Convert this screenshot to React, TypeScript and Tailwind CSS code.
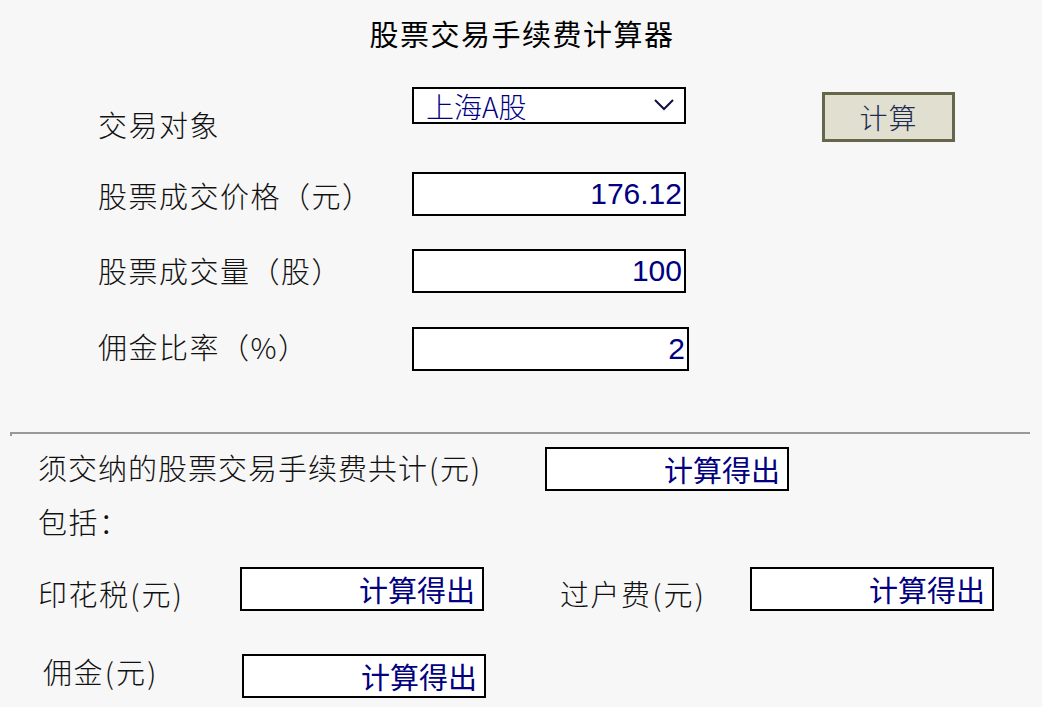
import React from "react";

const cjk = { fontFamily: '"Noto Sans CJK SC", "Noto Sans", sans-serif' };
const num = { fontFamily: '"Liberation Sans", Arial, sans-serif' };

function NumBox({ value, w }: { value: string; w: string }) {
  return (
    <div
      className={`${w} h-[44px] border-2 border-black bg-white flex items-center justify-end pr-[2px] text-[30px] leading-none text-[#000080]`}
      style={num}
    >
      {value}
    </div>
  );
}

function OutBox() {
  return (
    <div
      className="w-[244px] h-[44px] border-2 border-black bg-white flex items-center justify-end pr-[7px] text-[29px] leading-none font-normal text-[#000080]"
      style={cjk}
    >
      计算得出
    </div>
  );
}

function P({ c }: { c: string }) {
  return <span className="inline-block w-[12px] text-center">{c}</span>;
}

export default function App() {
  return (
    <div className="w-[1042px] h-[707px] bg-[#f7f7f7] overflow-hidden text-[#111]" style={cjk}>
      <div className="h-[66px] flex items-center justify-center">
        <h1 className="text-[29px] leading-none font-normal text-black tracking-[1.5px] pl-[2px]">股票交易手续费计算器</h1>
      </div>

      <div className="pl-[98px]">
        <div className="h-[106px] flex items-start">
          <div className="w-[314px] mt-[44px] text-[29px] leading-[29px] font-light tracking-[1.5px]">交易对象</div>
          <div className="mt-[21px] w-[274px] h-[37px] border-2 border-black bg-white flex items-center justify-between pl-[12px] pr-[10px]">
            <span className="text-[28px] leading-none font-light text-[#000080]">上海A股</span>
            <svg width="20" height="12" viewBox="0 0 20 12" className="mb-[2px]">
              <path d="M1 1 L10 10 L19 1" fill="none" stroke="#101040" strokeWidth="2" />
            </svg>
          </div>
          <div className="ml-[136px] mt-[26px] w-[133px] h-[50px] border-[3px] border-[#66664a] bg-[#e1dfcf] flex items-center justify-center text-[28px] leading-none font-light text-[#1c2c52] tracking-[1px]">
            计算
          </div>
        </div>

        <div className="h-[77px] flex items-start">
          <div className="w-[314px] mt-[9px] text-[29px] leading-[29px] font-light tracking-[1.5px] whitespace-nowrap">股票成交价格（元）</div>
          <NumBox value="176.12" w="w-[274px]" />
        </div>

        <div className="h-[78px] flex items-start">
          <div className="w-[314px] mt-[7px] text-[29px] leading-[29px] font-light tracking-[1.5px] whitespace-nowrap">股票成交量（股）</div>
          <NumBox value="100" w="w-[274px]" />
        </div>

        <div className="h-[44px] flex items-start">
          <div className="w-[314px] mt-[5px] text-[29px] leading-[29px] font-light tracking-[1.5px] whitespace-nowrap">佣金比率（%）</div>
          <NumBox value="2" w="w-[277px]" />
        </div>
      </div>

      <div className="mt-[61px] ml-[10px] mr-[12px] h-[4px] border-t-2 border-l-2 border-[#999999]" />

      <div className="mt-[11px] flex items-start">
        <div className="w-[545px] pl-[38px] mt-[6px] text-[29px] leading-[29px] font-light tracking-[1px] whitespace-nowrap">
          须交纳的股票交易手续费共计<P c="(" />元<P c=")" />
        </div>
        <OutBox />
      </div>

      <div className="mt-[16px] pl-[38px] text-[29px] leading-[29px] font-light tracking-[1.5px]">包括：</div>

      <div className="mt-[31px] flex items-start">
        <div className="w-[240px] pl-[38px] mt-[12px] text-[29px] leading-[29px] font-light tracking-[1.5px] whitespace-nowrap">
          印花税<P c="(" />元<P c=")" />
        </div>
        <OutBox />
        <div className="w-[266px] pl-[76px] mt-[12px] text-[29px] leading-[29px] font-light tracking-[1.5px] whitespace-nowrap">
          过户费<P c="(" />元<P c=")" />
        </div>
        <OutBox />
      </div>

      <div className="mt-[43px] flex items-start">
        <div className="w-[242px] pl-[43px] mt-[3px] text-[29px] leading-[29px] font-light tracking-[1.5px] whitespace-nowrap">
          佣金<P c="(" />元<P c=")" />
        </div>
        <OutBox />
      </div>
    </div>
  );
}
